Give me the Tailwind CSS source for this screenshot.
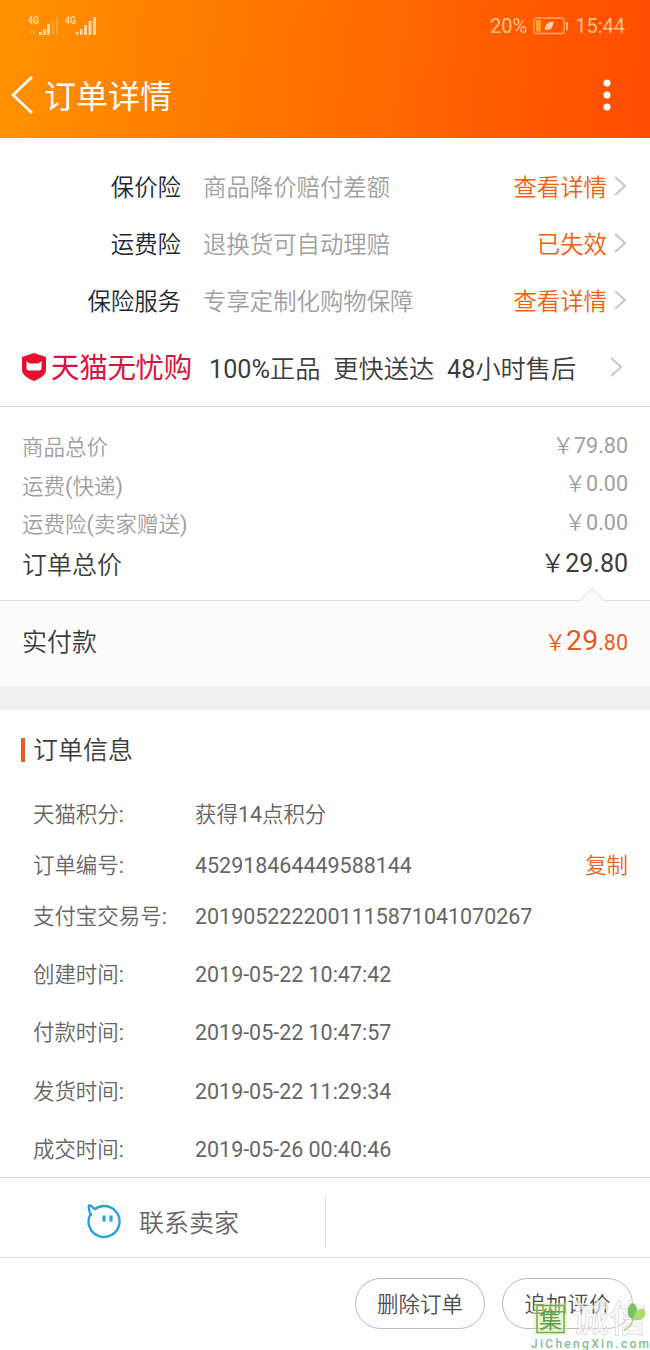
<!DOCTYPE html>
<html lang="zh-CN">
<head>
  <meta charset="UTF-8" />
  <meta name="viewport" content="width=device-width, initial-scale=1.0" />
  <title>订单详情</title>
  <script src="https://cdn.jsdelivr.net/npm/@tailwindcss/browser@4"></script>
</head>
<body class="bg-white font-['Roboto','Noto_Sans_CJK_SC',sans-serif] text-[#666] font-[350]">
  <div class="relative w-[650px] h-[1350px] overflow-hidden flex flex-col">

    <!-- Header -->
    <header class="h-[138px] shrink-0 bg-linear-[97deg,#ff9200,#ff4c00] text-white">
      <div class="h-[52px] flex items-center justify-between pl-7 pr-[25px] text-[#ffc08a]">
        <svg class="w-[70px] h-6" viewBox="0 0 70 24" fill="#ffd69c">
          <text x="0" y="10" font-size="11" font-weight="700" textLength="11" lengthAdjust="spacingAndGlyphs">4G</text>
          <path d="M2 16h2v4H2zM5 16h2v4H5z" opacity=".35" />
          <path d="M11 18h3v3h-3zM15 15h3v6h-3zM19 10h3v11h-3z" />
          <path d="M24 7h2v14h-2zM28 3h2v18h-2z" opacity=".3" />
          <text x="37" y="10" font-size="11" font-weight="700" textLength="11" lengthAdjust="spacingAndGlyphs">4G</text>
          <path d="M48 18h2.500v3H48zM52 15h2.500v6H52zM56 11h3v10h-3zM60.500 7h3v14h-3zM65 3h3v18h-3z" />
        </svg>
        <div class="flex items-center text-[20px] font-normal leading-6">
          <span>20%</span>
          <svg class="ml-[6px] mr-[7px] w-[35px] h-[18px]" viewBox="0 0 35 18">
            <rect x="1" y="1" width="30" height="15.500" rx="2.500" fill="none" stroke="#ffa45f" stroke-width="1.400" />
            <path d="M3 3h5v11.500H3z" fill="#ffa01e" />
            <path d="M12 13c-1-5 3-8 8.500-8.500C20 10 18 14 13.500 12.500z" fill="#ffd2ac" />
            <path d="M33 5h1.800v8H33z" fill="#ffc08a" />
          </svg>
          <span>15:44</span>
        </div>
      </div>
      <div class="h-[86px] flex items-center pl-[11px] pr-[39px]">
        <svg class="w-[22px] h-[40px]" viewBox="0 0 22 40" fill="none" stroke="#fff" stroke-width="2.600"><path d="M21 2 2 20l19 18" /></svg>
        <h1 class="ml-[11px] pt-[3px] text-[32px] leading-10 font-normal">订单详情</h1>
        <svg class="ml-auto w-2 h-8" viewBox="0 0 8 32" fill="#fff"><circle cx="4" cy="4" r="3.500" /><circle cx="4" cy="16" r="3.500" /><circle cx="4" cy="28" r="3.500" /></svg>
      </div>
    </header>

    <!-- Insurance -->
    <section class="h-[269px] shrink-0 pt-[22px] border-b border-[#d9d9d9] text-[23.400px]">
      <div class="h-[57px] flex items-center pr-6">
        <span class="w-[181px] text-right text-[#1c2834]">保价险</span>
        <span class="ml-[22px] text-[#a0a0a0]">商品降价赔付差额</span>
        <span class="ml-auto text-[#f0600f]">查看详情</span>
        <svg class="ml-[7px] mb-[6px] w-3 h-5" viewBox="0 0 12 20" fill="none" stroke="#c8c8c8" stroke-width="2"><path d="m1 1 10 9-10 9" /></svg>
      </div>
      <div class="h-[57px] flex items-center pr-6">
        <span class="w-[181px] text-right text-[#1c2834]">运费险</span>
        <span class="ml-[22px] text-[#a0a0a0]">退换货可自动理赔</span>
        <span class="ml-auto text-[#f0600f]">已失效</span>
        <svg class="ml-[7px] mb-[6px] w-3 h-5" viewBox="0 0 12 20" fill="none" stroke="#c8c8c8" stroke-width="2"><path d="m1 1 10 9-10 9" /></svg>
      </div>
      <div class="h-[57px] flex items-center pr-6">
        <span class="w-[181px] text-right text-[#1c2834]">保险服务</span>
        <span class="ml-[22px] text-[#a0a0a0]">专享定制化购物保障</span>
        <span class="ml-auto text-[#f0600f]">查看详情</span>
        <svg class="ml-[7px] mb-[6px] w-3 h-5" viewBox="0 0 12 20" fill="none" stroke="#c8c8c8" stroke-width="2"><path d="m1 1 10 9-10 9" /></svg>
      </div>
      <div class="h-[77px] flex items-center pl-[21px] pr-7 text-[25.200px] text-[#3c3c3c]">
        <svg class="mb-[6px] w-[26px] h-7" viewBox="0 0 26 28">
          <path d="M13 0 25 4v13c0 5-6 8.500-12 11C7 25.500 1 22 1 17V4z" fill="#e4102f" />
          <path d="M5.500 8q2 2.500 4.500 2.500h6q2.500 0 4.500-2.500v7q0 2.500-2.500 2.500H8q-2.500 0-2.500-2.500z" fill="#fff" />
        </svg>
        <span class="ml-[4px] text-[28.500px] font-normal text-[#d81440] tracking-[-0.300px]">天猫无忧购</span>
        <span class="ml-[17px]"><span class="font-normal">100%</span>正品</span>
        <span class="ml-[13px]">更快送达</span>
        <span class="ml-[13px]"><span class="font-normal">48</span>小时售后</span>
        <svg class="ml-auto mb-[5px] w-3 h-5" viewBox="0 0 12 20" fill="none" stroke="#c8c8c8" stroke-width="2"><path d="m1 1 10 9-10 9" /></svg>
      </div>
    </section>

    <!-- Price summary -->
    <section class="h-[193px] shrink-0 pt-[22px] px-[22px] text-[21.500px] text-[#a0a0a0]">
      <div class="h-[39px] flex items-center justify-between"><span>商品总价</span><span class="pb-[5px]">￥<span class="font-normal">79.80</span></span></div>
      <div class="h-[38px] flex items-center justify-between"><span>运费<span class="font-normal">(</span>快递<span class="font-normal">)</span></span><span class="pb-[5px]">￥<span class="font-normal">0.00</span></span></div>
      <div class="h-[39px] flex items-center justify-between"><span>运费险<span class="font-normal">(</span>卖家赠送<span class="font-normal">)</span></span><span class="pb-[5px]">￥<span class="font-normal">0.00</span></span></div>
      <div class="h-[42px] flex items-center justify-between text-[25px] text-[#3c3c3c]"><span>订单总价</span><span class="pb-[5px]">￥<span class="font-normal">29.80</span></span></div>
    </section>
    <section class="relative h-[87px] shrink-0 flex items-center justify-between px-[22px] bg-[#fcfcfc] border-t border-[#dedede] pb-[3px]">
      <svg class="absolute -top-[14px] left-[579px] w-[26px] h-[15px]" viewBox="0 0 26 15"><path d="m1 13.500 12-12 12 12" fill="#fcfcfc" stroke="#d4d4d4" /><path d="M2 14h22" stroke="#fcfcfc" stroke-width="2" /></svg>
      <span class="text-[25px] text-[#3c3c3c]">实付款</span>
      <span class="pb-[3px] text-[#e85a1c] text-[21.500px]">￥<span class="font-normal"><span class="text-[28.500px]">29</span>.80</span></span>
    </section>
    <div class="h-[23px] shrink-0 bg-[#f0f0f0]"></div>

    <!-- Order info -->
    <section class="h-[468px] shrink-0 border-b border-[#d9d9d9] text-[21.450px]">
      <div class="h-[79px] flex items-center pl-[21px]">
        <div class="w-[4px] h-6 bg-[#e2602c]"></div>
        <h2 class="ml-[8px] pt-[3px] text-[25px] text-[#3c3c3c]">订单信息</h2>
      </div>
      <div class="pt-px pl-[33px] pr-[22px]">
        <div class="h-[51px] flex items-center"><span class="w-[162px]">天猫积分<span class="font-normal">:</span></span><span>获得<span class="font-normal">14</span>点积分</span></div>
        <div class="h-[51px] flex items-center"><span class="w-[162px]">订单编号<span class="font-normal">:</span></span><span class="font-normal">452918464449588144</span><span class="ml-auto text-[#e8601c]">复制</span></div>
        <div class="h-[50px] flex items-center"><span class="w-[162px]">支付宝交易号<span class="font-normal">:</span></span><span class="font-normal">2019052222001115871041070267</span></div>
        <div class="h-[66px] flex items-center"><span class="w-[162px]">创建时间<span class="font-normal">:</span></span><span class="font-normal">2019-05-22 10:47:42</span></div>
        <div class="h-[51px] flex items-center"><span class="w-[162px]">付款时间<span class="font-normal">:</span></span><span class="font-normal">2019-05-22 10:47:57</span></div>
        <div class="h-[66px] flex items-center"><span class="w-[162px]">发货时间<span class="font-normal">:</span></span><span class="font-normal">2019-05-22 11:29:34</span></div>
        <div class="h-[51px] flex items-center"><span class="w-[162px]">成交时间<span class="font-normal">:</span></span><span class="font-normal">2019-05-26 00:40:46</span></div>
      </div>
    </section>

    <!-- Contact seller -->
    <section class="h-[80px] shrink-0 flex items-center border-b border-[#dedede]">
      <div class="w-[326px] h-[52px] mt-[8px] flex items-center border-r border-[#dedede] pl-[86px]">
        <svg class="w-[36px] h-[36px] mb-px" viewBox="0 0 36 36" fill="none" stroke="#2aa2dc" stroke-width="2.400" stroke-linecap="round" stroke-linejoin="round">
          <path d="M5 12Q2 6 3 2.500Q5 2 8.500 6M9 6Q13 3 18 3A15.500 15.500 0 1 1 4.500 11" />
          <path d="M18 12.500v6M25 12.500v6" stroke-width="3.200" stroke-linecap="butt" />
        </svg>
        <span class="ml-[17px] pt-[4px] text-[25px]">联系卖家</span>
      </div>
    </section>

    <!-- Actions -->
    <footer class="grow flex items-start justify-end gap-[17px] pt-[20px] pr-[17px] text-[21.500px] text-[#4c4c4c]">
      <button class="w-[130px] h-[51px] pt-[4px] rounded-full border border-[#b8b8b8]">删除订单</button>
      <button class="w-[131px] h-[51px] pt-[4px] rounded-full border border-[#b8b8b8]">追加评价</button>
    </footer>

    <!-- Watermark -->
    <div class="absolute left-[530px] top-[1300px] w-[120px] h-[50px]">
      <svg class="w-[120px] h-[50px]" viewBox="0 0 120 50">
        <rect x="4" y="3" width="33" height="32" fill="#d8f29a" opacity=".5" />
        <rect x="7" y="5.500" width="27" height="27" fill="none" stroke="#6fa862" stroke-width="1.500" />
        <text x="9" y="28" font-size="23" font-weight="400" fill="#5f9f55">集</text>
        <text x="42" y="32" font-size="37" font-weight="500" fill="#fff" fill-opacity=".6" stroke="#d4d4d4" stroke-width=".7">诚信</text>
        <path d="M103 20c-7-4-7-13-1-17 6 2 7 9 1 17z" fill="#6dbb55" opacity=".9" />
        <path d="M103 20c0-7 5-12 11-11 4 5 0 13-11 11z" fill="#a3dc5c" opacity=".9" />
        <path d="M103 20q-3 8-9 10" fill="none" stroke="#a5d486" stroke-width="1.500" />
        <text x="1" y="48" font-size="12" font-weight="500" fill="#80bd91" textLength="118">JiChengXin.com</text>
      </svg>
    </div>
  </div>
</body>
</html>
